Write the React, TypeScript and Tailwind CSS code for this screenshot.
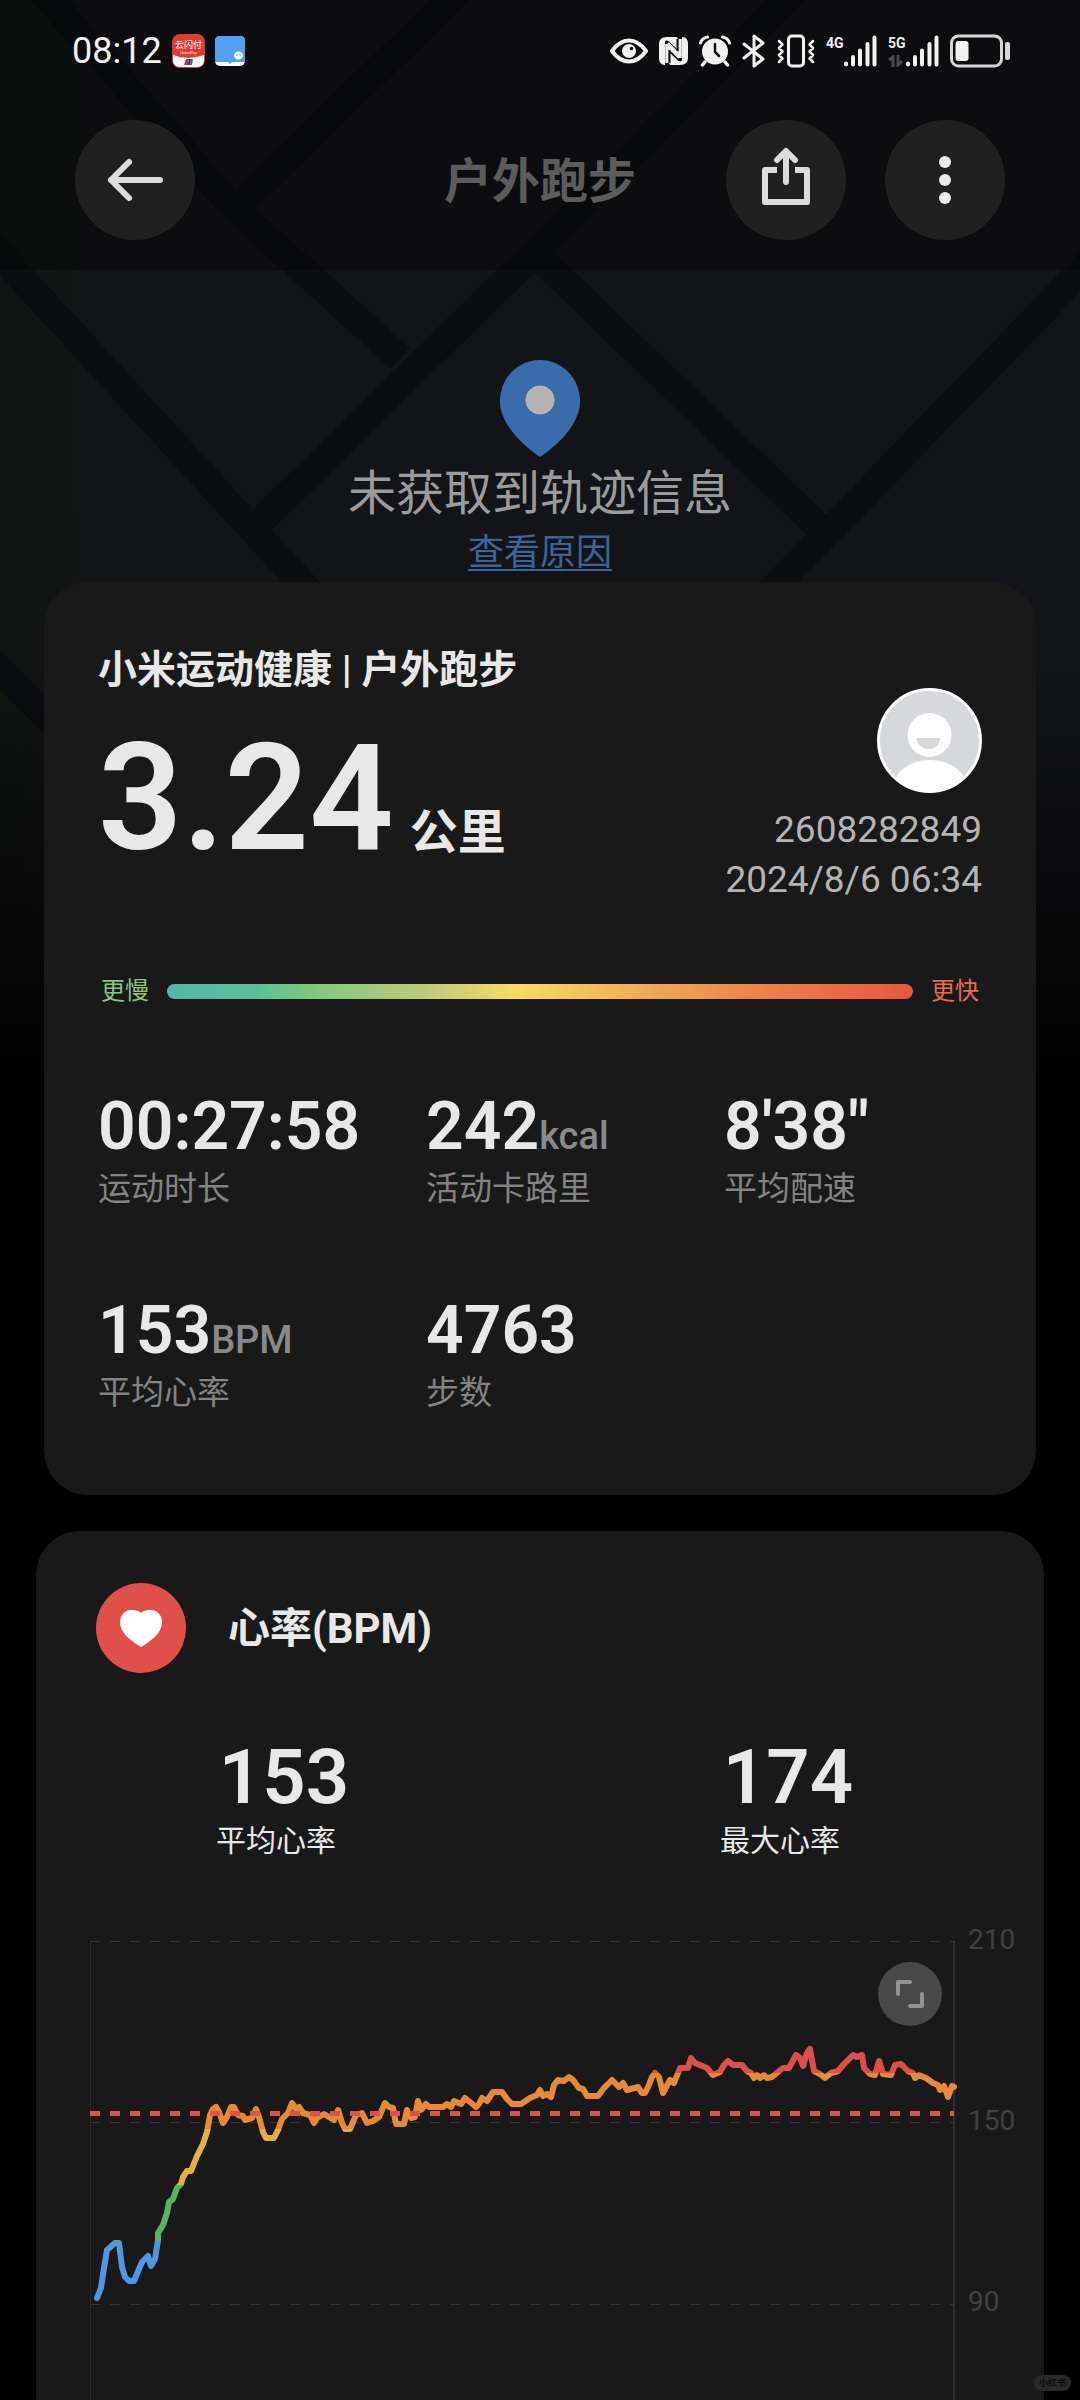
import React from 'react';

interface Metric {
  value: string;
  unit?: string;
  label: string;
}

const metrics: Metric[] = [
  { value: '00:27:58', label: '运动时长' },
  { value: '242', unit: 'kcal', label: '活动卡路里' },
  { value: '8\'38"', label: '平均配速' },
  { value: '153', unit: 'BPM', label: '平均心率' },
  { value: '4763', label: '步数' },
];

const heartStats = [
  { value: '153', label: '平均心率' },
  { value: '174', label: '最大心率' },
];

const axisLabels = ['210', '150', '90'];

// x = time, y = distance below the 210 line (about 3 units per beat)
const heartRate = `7,357 11,347 14,327 17,309 25,302 29,302 32,326 35,336 39,340 44,340 52,321 58,315 61,325 65,318 68,299
68,292 73,284 77,272 79,261 83,258 87,247 91,243 93,236 97,230 101,230 107,215 113,203 117,191 120,174 123,168 126,166
129,171 133,182 137,176 141,166 144,166 148,174 153,175 155,179 162,177 166,168 169,176 173,191 176,197 184,197 188,189
192,178 198,172 202,162 206,168 209,166 213,172 220,174 224,182 227,177 234,173 244,179 248,169 252,182 255,188 260,188
266,174 272,172 277,182 283,180 289,176 295,162 299,166 303,167 306,183 314,183 317,169 321,177 325,176 328,160 331,169
336,163 339,166 353,166 357,163 361,166 364,160 371,163 375,157 380,161 386,166 389,163 392,157 397,160 403,151 412,151
417,158 422,163 431,163 440,157 447,154 450,149 453,155 457,153 461,156 464,144 468,139 474,140 479,136 483,139 489,147
493,148 497,155 508,155 514,147 522,139 529,146 533,142 537,149 548,146 552,152 555,152 558,146 562,136 565,132 569,136
573,152 580,139 584,142 588,132 590,127 598,127 601,117 605,122 617,127 623,134 630,131 634,124 638,120 643,124 652,124
657,130 661,132 664,137 667,134 670,137 674,134 677,137 682,136 688,131 693,127 699,127 706,114 710,117 713,125 717,112
720,108 724,130 730,133 735,137 741,132 748,130 755,122 763,114 767,116 772,114 774,127 780,133 785,134 789,120 793,133
801,134 805,124 811,123 818,130 823,132 825,137 829,134 836,137 843,142 848,144 850,149 854,145 858,156 862,145 864,146`;

// heart rate zones, top to bottom
const zones = [
  { color: '#dd5049', from: 0, to: 132 },
  { color: '#e88a35', from: 132, to: 188 },
  { color: '#e3b042', from: 188, to: 244 },
  { color: '#57b560', from: 244, to: 300 },
  { color: '#4f97e0', from: 300, to: 459 },
];

const MapBackground: React.FC = () => (
  <svg
    className="absolute inset-x-0 top-0 w-full"
    viewBox="0 0 1080 1100"
    aria-hidden="true"
  >
    <defs>
      <linearGradient id="fade" x1="0" y1="0" x2="0" y2="1">
        <stop offset="0.6" stopColor="#000" stopOpacity="0" />
        <stop offset="1" stopColor="#000" />
      </linearGradient>
      <linearGradient id="park" x1="0" y1="0" x2="1" y2="0">
        <stop offset="0" stopColor="#111411" />
        <stop offset="1" stopColor="#131417" />
      </linearGradient>
    </defs>
    <rect width="1080" height="1100" fill="#131417" />
    <rect width="120" height="1100" fill="url(#park)" />
    <g stroke="#0c0d10" strokeWidth="28" fill="none">
      <path d="M-10 244 L310 592" />
      <path d="M32 -20 L232 206 L400 358" />
      <path d="M470 -20 L245 200" />
      <path d="M806 -20 L525 262 L262 520" />
      <path d="M540 258 L828 536" />
      <path d="M1090 262 L770 592" />
      <path d="M-10 660 L80 750" />
    </g>
    <rect width="1080" height="1100" fill="url(#fade)" />
  </svg>
);

const SignalBars: React.FC = () => (
  <svg width="33" height="32" viewBox="0 0 33 32" stroke="#f2f2f2" strokeWidth="4" strokeLinecap="round" aria-hidden="true">
    <path d="M2 28.500V29.500M9 22V29.500M16 15.500V29.500M23.500 9V29.500M30.500 2.500V29.500" />
  </svg>
);

const StatusBar: React.FC = () => (
  <div className="flex h-[102px] items-center justify-between pl-[72px] pr-[70px]">
    <div className="flex items-center gap-[10px]">
      <span className="text-4xl text-[#f2f2f2]">08:12</span>
      <svg width="33" height="34" viewBox="0 0 33 34" aria-hidden="true">
        <rect width="33" height="34" rx="8" fill="#e03a34" />
        <path d="M1 21 Q16.500 27 32 21 V26 Q32 33 25 33 H8 Q1 33 1 26 Z" fill="#fff" />
        <path d="M14 25h3l-1 6h-4z" fill="#c9303a" />
        <path d="M17 25h2l-1 6h-2z" fill="#1c3f70" />
        <path d="M19 25h2l-1 6h-2z" fill="#1f7a76" />
        <text x="16.500" y="14" textAnchor="middle" fontSize="9" fill="#fff" fontFamily="Noto Sans CJK SC, sans-serif">云闪付</text>
        <text x="16.500" y="20" textAnchor="middle" fontSize="4" fill="#fff" fontFamily="Roboto, sans-serif">UnionPay</text>
      </svg>
      <svg width="30" height="30" viewBox="0 0 30 30" aria-hidden="true">
        <rect width="30" height="30" rx="5" fill="#fff" />
        <path d="M5 0H25Q30 0 30 5V26H17L15 28L13 26H0V5Q0 0 5 0Z" fill="#559ff0" />
        <ellipse cx="23.500" cy="19.500" rx="4.500" ry="4" fill="#fff" />
        <circle cx="22" cy="19" r="0.800" fill="#559ff0" />
        <circle cx="25" cy="19" r="0.800" fill="#559ff0" />
      </svg>
    </div>

    <div className="flex items-center gap-[11px]">
      <svg width="38" height="28" viewBox="0 0 38 28" fill="none" aria-hidden="true">
        <path d="M2 14C8 5.500 13 3.500 19 3.500S30 5.500 36 14C30 22.500 25 24.500 19 24.500S8 22.500 2 14Z" stroke="#f2f2f2" strokeWidth="4" strokeLinejoin="round" />
        <circle cx="19" cy="14" r="7" fill="#f2f2f2" />
        <circle cx="21.500" cy="11.500" r="1.700" fill="#0d0e10" />
      </svg>
      {/* NFC */}
      <svg width="29" height="30" viewBox="0 0 29 30" aria-hidden="true">
        <path d="M8 1H17Q19 1 19 4V14L10 5.500Q6 3 6 7V29Q0 29 0 22V8Q0 1 8 1Z" fill="#f2f2f2" />
        <path d="M21 29H12Q10 29 10 26V16L19 24.500Q23 27 23 23V1Q29 1 29 8V22Q29 29 21 29Z" fill="#f2f2f2" />
        <path d="M8 8V27M21 3V22" stroke="#f2f2f2" strokeWidth="3.500" />
        <path d="M8 8L21 21" stroke="#f2f2f2" strokeWidth="5" />
        <path d="M10.500 14V27M18.500 3V15" stroke="#0d0e10" strokeWidth="2" />
      </svg>
      <svg width="32" height="32" viewBox="0 0 32 32" fill="none" stroke="#f2f2f2" strokeLinecap="round" aria-hidden="true">
        <circle cx="16" cy="16.500" r="13" fill="#f2f2f2" stroke="none" />
        <path d="M1.500 8Q3 3 8.500 2M30.500 8Q29 3 23.500 2" strokeWidth="3" />
        <path d="M6 27L3.500 30M26 27L28.500 30" strokeWidth="3.500" />
        <path d="M16 9V17L20 21" stroke="#0d0e10" strokeWidth="2.500" />
      </svg>
      <svg width="24" height="34" viewBox="0 0 24 34" fill="none" stroke="#f2f2f2" strokeWidth="3" strokeLinejoin="round" strokeLinecap="round" aria-hidden="true">
        <path d="M2 10L21 25L12 32V2L21 9L2 24" />
      </svg>
      <svg width="38" height="34" viewBox="0 0 38 34" fill="none" stroke="#f2f2f2" strokeLinejoin="round" strokeLinecap="round" aria-hidden="true">
        <rect x="11.500" y="2" width="15" height="30" rx="3.500" strokeWidth="3" />
        <path d="M2 7L5.500 10.500L2 14L5.500 17.500L2 21L5.500 24.500L2 28M36 7L32.500 10.500L36 14L32.500 17.500L36 21L32.500 24.500L36 28" strokeWidth="2.500" />
      </svg>
      <div className="flex items-start">
        <span className="w-[18px] text-sm leading-4 font-bold text-[#f2f2f2]">4G</span>
        <SignalBars />
      </div>
      <div className="flex items-start">
        <div className="flex w-[18px] flex-col gap-1">
          <span className="text-sm leading-4 font-bold text-[#f2f2f2]">5G</span>
          <svg width="15" height="12" viewBox="0 0 15 12" fill="none" stroke="#4a4a4b" strokeWidth="3" aria-hidden="true">
            <path d="M1 5L5 2V12M10 0V10L14 6" />
          </svg>
        </div>
        <SignalBars />
      </div>
      <svg width="60" height="34" viewBox="0 0 60 34" aria-hidden="true">
        <rect x="1.500" y="2" width="50" height="30" rx="7" fill="none" stroke="#d6d6d6" strokeWidth="3" />
        <rect x="5.500" y="7" width="13" height="20" rx="3" fill="#f2f2f2" />
        <rect x="55" y="8" width="5" height="18" rx="2" fill="#d6d6d6" />
      </svg>
    </div>
  </div>
);

const roundButton = 'flex size-[120px] items-center justify-center rounded-full bg-[#202020]';

const Header: React.FC = () => (
  <header className="relative bg-black/30 pb-[30px]">
    <StatusBar />
    <div className="mt-[18px] grid grid-cols-[1fr_auto_1fr] items-center px-[75px]">
      <button type="button" aria-label="返回" className={roundButton}>
        <svg width="60" height="48" viewBox="0 0 60 48" fill="none" stroke="#dcdcdc" strokeWidth="6" strokeLinecap="round" strokeLinejoin="round" aria-hidden="true">
          <path d="M55 24H6M24 6L6 24L24 42" />
        </svg>
      </button>
      <h1 className="pt-1 text-5xl font-bold text-[#5c5c5d]">户外跑步</h1>
      <div className="flex justify-end gap-[39px]">
        <button type="button" aria-label="分享" className={roundButton}>
          <svg width="60" height="66" viewBox="0 0 60 66" fill="none" stroke="#dcdcdc" strokeWidth="6" strokeLinejoin="round" aria-hidden="true">
            <path d="M21 23H9V55H51V23H39" />
            <path d="M30 35V5M21 13L30 4L39 13" strokeLinecap="round" />
          </svg>
        </button>
        <button type="button" aria-label="更多" className={roundButton}>
          <svg width="12" height="50" viewBox="0 0 12 50" fill="#ebebeb" aria-hidden="true">
            <circle cx="6" cy="7" r="6" />
            <circle cx="6" cy="25" r="6" />
            <circle cx="6" cy="43" r="6" />
          </svg>
        </button>
      </div>
    </div>
  </header>
);

const NoTrack: React.FC = () => (
  <section className="relative flex flex-col items-center gap-[9px] pt-[90px] pb-[7px]">
    <svg width="80" height="97" viewBox="0 0 80 97" aria-hidden="true">
      <path d="M40 0C62 0 80 18 80 41C80 62 62 82 40 97C18 82 0 62 0 41C0 18 18 0 40 0Z" fill="#396ca9" />
      <circle cx="40" cy="40" r="14.500" fill="#b3b4b3" />
    </svg>
    <p className="text-5xl leading-[56px] text-[#9b9b9c]">未获取到轨迹信息</p>
    <a href="#reason" className="text-4xl leading-[44px] text-[#396599] underline decoration-2 underline-offset-4">查看原因</a>
  </section>
);

const Avatar: React.FC = () => (
  <svg width="105" height="105" viewBox="0 0 105 105" aria-label="头像" role="img">
    <defs>
      <clipPath id="avatarClip">
        <circle cx="52.500" cy="52.500" r="51" />
      </clipPath>
    </defs>
    <circle cx="52.500" cy="52.500" r="51" fill="#d7d8dc" />
    <ellipse cx="53" cy="102" rx="38" ry="30" fill="#fff" clipPath="url(#avatarClip)" />
    <circle cx="52.500" cy="47" r="22" fill="#fff" />
    <path d="M40 50H63C63 57 58 61 51.500 61S40 57 40 50Z" fill="#d7d8dc" />
    <circle cx="52.500" cy="52.500" r="51" fill="none" stroke="#fff" strokeWidth="3" />
  </svg>
);

const SummaryCard: React.FC = () => (
  <section className="relative mx-[44px] rounded-[44px] bg-[#191919] px-[54px] pt-16 pb-20">
    <div className="flex justify-between">
      <div>
        <h2 className="text-[39px] leading-[48px] font-bold">小米运动健康 | 户外跑步</h2>
        <p className="mt-[30px] flex items-baseline gap-4 font-semibold">
          <span className="text-[148px] leading-[150px]">3.24</span>
          <span className="text-5xl leading-none font-bold">公里</span>
        </p>
      </div>
      <div className="flex flex-col items-end pt-[42px] text-[37px] leading-[50px] text-[#b4b4b4]">
        <Avatar />
        <span className="mt-3">2608282849</span>
        <span>2024/8/6 06:34</span>
      </div>
    </div>

    <div className="mt-[70px] flex items-center gap-[18px] px-[3px] text-2xl leading-8">
      <span className="text-[#8ac67e]">更慢</span>
      <div className="h-[15px] flex-1 rounded-full bg-[linear-gradient(90deg,#54b8a4_0%,#58c19a_12%,#86c97c_21%,#bcc97a_34%,#f8dc60_47%,#f0b254_62%,#ee8a4c_76%,#ea5540_100%)]" />
      <span className="text-[#e8694c]">更快</span>
    </div>

    <dl className="mt-[84px] grid grid-cols-[328fr_298fr_258fr] gap-y-[84px]">
      {metrics.map((m) => (
        <div key={m.label} className="flex flex-col-reverse gap-1">
          <dt className="text-[33px] leading-[44px] text-[#838383]">{m.label}</dt>
          <dd className="flex h-[72px] items-baseline text-[66px] leading-[72px] font-semibold">
            {m.value}
            {m.unit && <span className="text-[38px] leading-none font-medium text-[#8a8a8a]">{m.unit}</span>}
          </dd>
        </div>
      ))}
    </dl>
  </section>
);

const HeartChart: React.FC = () => (
  <div className="mt-20 flex pl-[54px]">
    <div className="relative flex-1">
      <svg className="block w-full overflow-visible" viewBox="0 0 864 459" fill="none" role="img" aria-label="心率曲线">
        <defs>
          <linearGradient id="zones" gradientUnits="userSpaceOnUse" x1="0" y1="0" x2="0" y2="459">
            {zones.map((z) => (
              <React.Fragment key={z.color}>
                <stop offset={z.from / 459} stopColor={z.color} />
                <stop offset={z.to / 459} stopColor={z.color} />
              </React.Fragment>
            ))}
          </linearGradient>
        </defs>
        <path d="M0.500 0V459" stroke="#2a2a2a" />
        <path d="M864 0V459" stroke="#303030" strokeWidth="2" />
        <path d="M0 0.500H864M0 181.500H864M0 363.500H864" stroke="#343434" strokeDasharray="10 10" />
        <polyline points={heartRate} stroke="url(#zones)" strokeWidth="6" strokeLinejoin="round" strokeLinecap="round" />
        <path d="M0 172.500H864" stroke="#db534d" strokeWidth="5" strokeDasharray="10 10" />
      </svg>
      <button type="button" aria-label="全屏" className="absolute top-[21px] right-3 flex size-16 items-center justify-center rounded-full bg-[#484848]">
        <svg width="28" height="28" viewBox="0 0 28 28" fill="none" stroke="#929292" strokeWidth="4" strokeLinecap="round" strokeLinejoin="round" aria-hidden="true">
          <path d="M2 14V2H14M26 14V26H14" />
        </svg>
      </button>
    </div>
    <div className="-mt-[21px] w-[90px] pl-[14px] text-[28px] leading-10 text-[#414141]">
      {axisLabels.map((label) => (
        <div key={label} className="h-[181px]">{label}</div>
      ))}
    </div>
  </div>
);

const HeartRateCard: React.FC = () => (
  <section className="relative mx-9 mt-9 rounded-t-[44px] bg-[#191919] pt-[52px]">
    <div className="flex items-center gap-[42px] pl-[60px]">
      <span className="flex size-[90px] items-center justify-center rounded-full bg-[#de5049]">
        <svg width="42" height="37" viewBox="0 0 42 37" fill="#fff" aria-hidden="true">
          <path d="M21 3C24 0 28 0 31 0C37 0 42 5 42 12C42 23 31 31 21 37C11 31 0 23 0 12C0 5 5 0 11 0C14 0 18 0 21 3Z" />
        </svg>
      </span>
      <h2 className="text-[42px] font-bold">心率(BPM)</h2>
    </div>

    <dl className="mt-16 grid grid-cols-2 text-center">
      {heartStats.map((s) => (
        <div key={s.label} className="flex flex-col-reverse gap-1">
          <dt className="pr-6 text-3xl leading-10">{s.label}</dt>
          <dd className="pr-2 text-[76px] leading-[80px] font-semibold">{s.value}</dd>
        </div>
      ))}
    </dl>

    <HeartChart />
  </section>
);

export default function App() {
  return (
    <main className="relative min-h-screen overflow-hidden bg-black font-[Roboto,'Noto_Sans_CJK_SC',sans-serif] text-[#e8e8e8]">
      <MapBackground />
      <Header />
      <NoTrack />
      <SummaryCard />
      <HeartRateCard />
      <span className="fixed right-[9px] bottom-[9px] rounded-full bg-[#292929] px-[5px] text-[9px] leading-4 font-bold text-[#0c0c0c]">小红书</span>
    </main>
  );
}
